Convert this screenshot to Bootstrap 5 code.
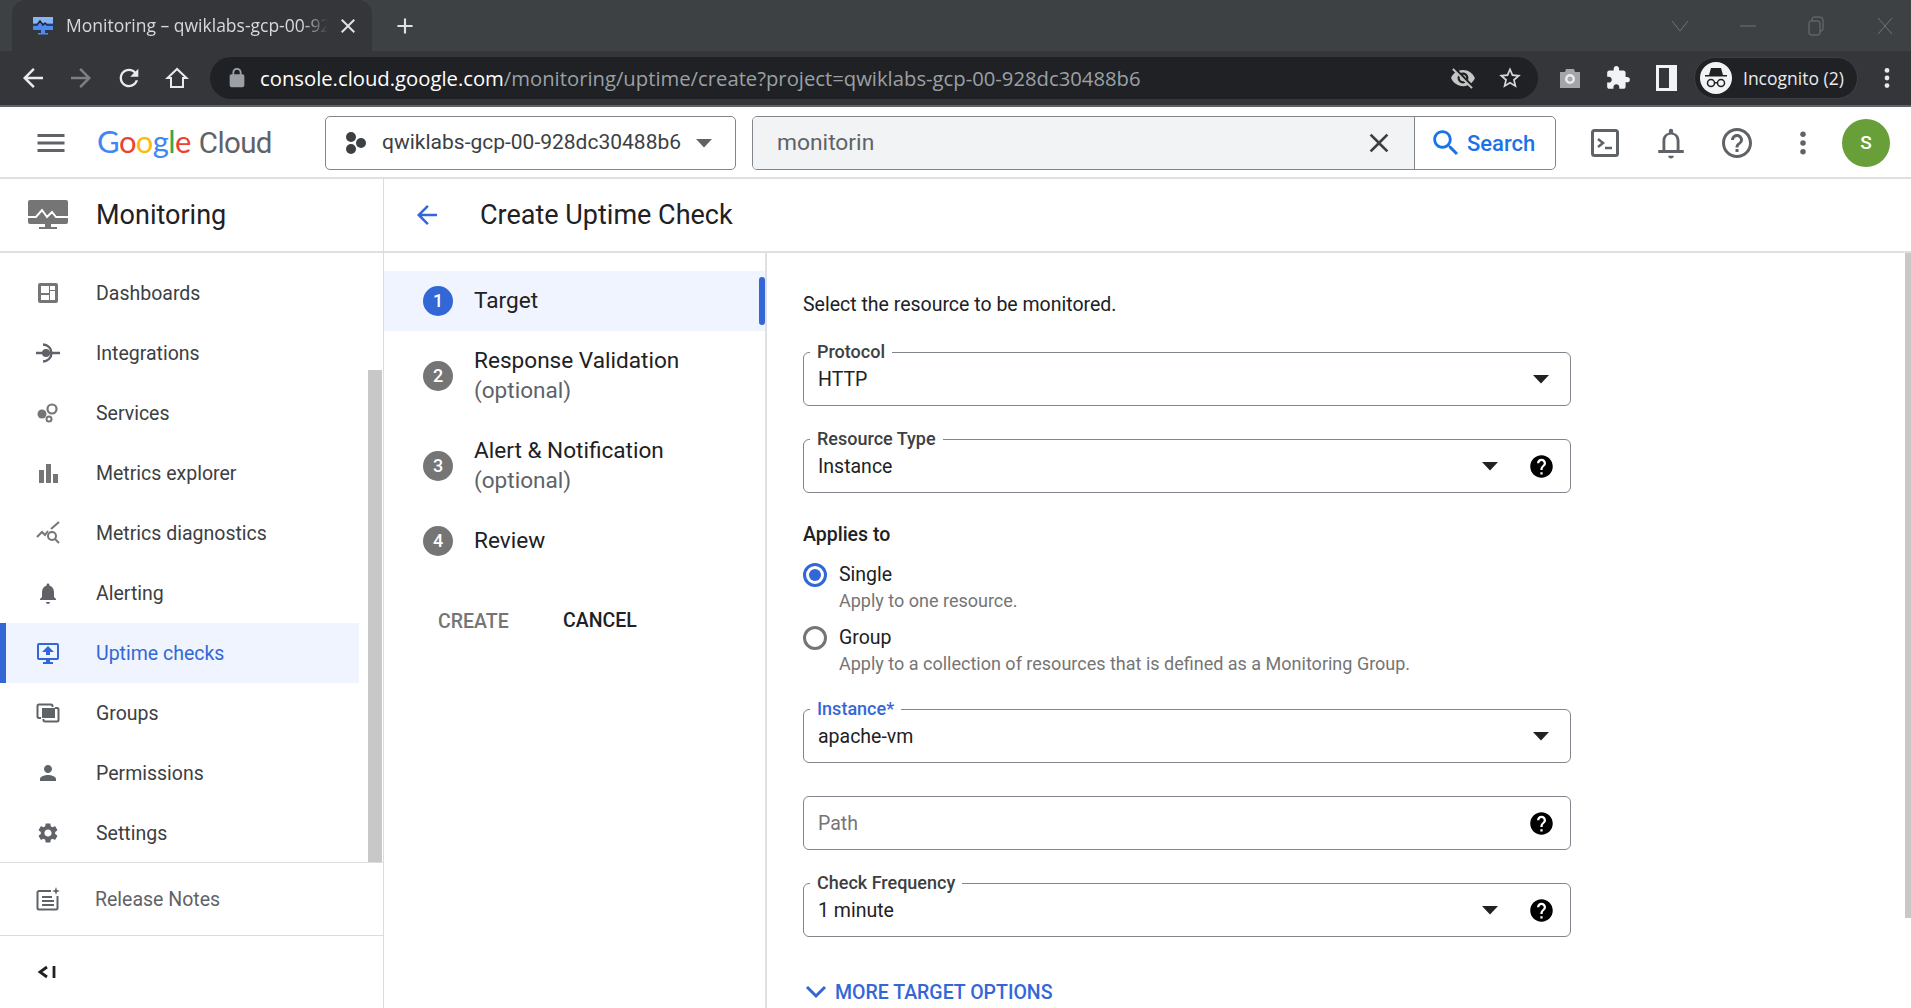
<!DOCTYPE html>
<html lang="en">
<head>
  <meta charset="UTF-8">
  <title>Monitoring – Create Uptime Check</title>
  <meta name="viewport" content="width=device-width, initial-scale=1">
  <link href="https://cdn.jsdelivr.net/npm/bootstrap@5.3.0/dist/css/bootstrap.min.css" rel="stylesheet">
  <style>
    html, body { height: 100%; overflow: hidden; }
    body { font-family: Roboto, "Liberation Sans", sans-serif; font-size: 19.500px; color: #202124; background: #fff; }
    svg { display: block; flex: none; }

    /* browser chrome */
    .tabstrip { height: 51px; background: #3e4144; padding-left: 12px; }
    .tab-active { width: 360px; height: 51px; background: #35363a; border-radius: 14px 14px 0 0; padding-left: 20px; color: #d6d9dc; font-family: "Open Sans", sans-serif; font-size: 17.500px; }
    .tab-title { width: 262px; margin-left: 12px; white-space: nowrap; overflow: hidden; -webkit-mask-image: linear-gradient(90deg, #000 90%, transparent); mask-image: linear-gradient(90deg, #000 90%, transparent); }
    .tab-new { width: 66px; margin-left: 0; }
    .win-btn { width: 68px; }
    .win-btn.last { width: 52px; margin-left: 9px; }
    .toolbar { height: 56px; background: #35363a; border-bottom: 2px solid #5f6368; padding-left: 9px; }
    .tool-slot { width: 48px; height: 42px; }
    .omnibox { width: 1328px; height: 42px; margin-left: 9px; background: #202124; border-radius: 21px; padding-left: 16px; font-family: "Open Sans", sans-serif; font-size: 20.250px; }
    .url-text { padding-top: 1px; }
    .url-host { color: #fff; margin-left: 12px; }
    .url-rest { color: #9aa0a6; }
    .eye-gap { margin-left: 21px; margin-right: 15px; }
    .incog-pill { width: 164px; height: 42px; margin-left: 4px; background: #202124; border: 1px solid #3c4043; border-radius: 21px; padding-left: 5px; color: #e8eaed; font-family: "Open Sans", sans-serif; font-size: 17.500px; }
    .incog-face { width: 32px; height: 32px; border-radius: 50%; background: #f1f3f4; margin-right: 11px; }
    .kebab-slot { width: 48px; margin-left: 5px; }

    /* console top bar */
    .topbar { height: 72px; border-bottom: 2px solid #e0e0e0; padding-top: 2px; }
    .burger-slot { width: 81px; padding-left: 33px; }
    .gc-logo { width: 228px; margin-top: -2px; font-family: Lato, sans-serif; font-size: 31px; letter-spacing: -.6px; line-height: 1; white-space: nowrap; }
    .gc-cloud { color: #5f6368; margin-left: 8px; font-family: Roboto, sans-serif; font-weight: 400; font-size: 29.500px; }
    .project-box { width: 411px; height: 54px; border: 1px solid #80868b; border-radius: 5px; padding-left: 19px; color: #3c4043; font-size: 21px; }
    .project-name { margin-left: 15px; width: 314px; white-space: nowrap; }
    .search-box { width: 804px; height: 54px; margin-left: 16px; border: 1px solid #80868b; border-radius: 5px; overflow: hidden; }
    .search-input { background: #f1f3f4; padding-left: 24px; color: #5f6368; font-size: 22.800px; border-right: 1px solid #80868b; }
    .search-clear { width: 54px; margin-right: 8px; }
    .search-action { width: 140px; padding-left: 14px; color: #1a73e8; font-weight: 500; font-size: 22px; }
    .top-icon { width: 66px; }
    .top-icons { margin-left: 16px; }
    .user-dot { width: 48px; height: 48px; margin-left: 6px; border-radius: 50%; background: #689f38; color: #fff; font-weight: 500; font-size: 19px; }

    /* left nav */
    .app-body { height: 829px; }
    .side-nav { width: 384px; border-right: 1px solid #dadce0; }
    .side-head { height: 74px; border-bottom: 2px solid #e0e0e0; padding-left: 28px; font-size: 27px; color: #202124; }
    .side-head span { margin-left: 28px; }
    .side-scroll { height: 610px; border-bottom: 1px solid #dadce0; }
    .side-list { width: 368px; padding-top: 10px; }
    .side-link { height: 60px; width: 359px; padding-left: 36px; color: #3c4043; flex-shrink: 0; }
    .side-link span { margin-left: 36px; padding-top: 2px; }
    .side-link.on { background: #eff4fe; color: #3367d6; box-shadow: inset 6px 0 0 #3367d6; }
    .side-bar { width: 14px; height: 492px; background: #c8c8c8; align-self: flex-end; }
    .side-notes { height: 73px; padding-left: 36px; border-bottom: 1px solid #dadce0; color: #5f6368; }
    .side-notes span { margin-left: 35px; padding-top: 2px; }
    .side-collapse { padding: 24px 0 0 36px; }

    /* page */
    .page-head { height: 74px; border-bottom: 2px solid #e0e0e0; padding-left: 28px; font-size: 27px; color: #202124; }
    .page-head span { margin-left: 38px; }
    .page-main { height: 755px; }

    .step-col { width: 383px; padding-top: 18px; border-right: 2px solid #e0e0e0; flex: none; }
    .step-row { padding-left: 39px; font-size: 22.600px; line-height: 30px; color: #202124; position: relative; }
    .step-row.one { height: 60px; }
    .step-row.two { height: 90px; }
    .step-row.on { background: #eff4fe; }
    .step-row.on::after { content: ""; position: absolute; right: 0; top: 6px; bottom: 6px; width: 6px; border-radius: 3px; background: #3367d6; }
    .step-num { width: 30px; height: 30px; border-radius: 50%; background: #757575; color: #fff; font-weight: 500; font-size: 18px; margin-right: 21px; flex: none; }
    .step-row.on .step-num { background: #3367d6; }
    .step-opt { color: #5f6368; }
    .step-actions { padding: 35px 0 0 54px; font-weight: 500; }
    .step-actions .off { color: #757575; width: 125px; margin-top: 1px; }

    .form-col { padding: 39px 0 0 36px; position: relative; }
    .form-inner { width: 768px; }
    .line-24 { line-height: 26px; margin-bottom: -2px; }
    .fld { height: 54px; border: 1px solid #80868b; border-radius: 6px; position: relative; padding: 0 15px 0 14px; margin-top: 33px; color: #202124; line-height: 24px; }
    .fld > span { padding-top: 2px; }
    .fld-label { position: absolute; left: 6px; top: -12px; padding: 0 7px; background: #fff; font-size: 18px; font-weight: 500; line-height: 22px; color: #3c4043; }
    .fld-label.hot { color: #3367d6; }
    .fld-ph { color: #757575; }
    .caret-main { margin-right: 6px; }
    .caret-gap { margin-right: 6px; }
    .radio-ring { width: 24px; height: 24px; border-radius: 50%; border: 3px solid #757575; margin-right: 12px; flex: none; }
    .radio-ring.on { border-color: #3367d6; padding: 3px; }
    .radio-ring.on i { display: block; width: 100%; height: 100%; border-radius: 50%; background: #3367d6; }
    .radio-help { padding-left: 36px; color: #757575; font-size: 18px; line-height: 22px; }
    .more-link { margin: 42px 0 0 2px; color: #3367d6; font-weight: 500; line-height: 24px; }
    .more-link span { margin-left: 8px; padding-top: 2px; }
    .page-bar { position: absolute; right: 0; top: 0; width: 6px; height: 665px; background: #c8c8c8; }
  </style>
</head>
<body>

<svg width="0" height="0" class="position-absolute">
  <symbol id="i-help" viewBox="0 0 24 24"><path d="M12 2C6.480 2 2 6.480 2 12s4.480 10 10 10 10-4.480 10-10S17.520 2 12 2zm1 17h-2v-2h2v2zm2.070-7.750l-.9.92C13.450 12.900 13 13.500 13 15h-2v-.5c0-1.100.45-2.100 1.170-2.830l1.240-1.260c.37-.36.59-.86.59-1.410 0-1.100-.9-2-2-2s-2 .9-2 2H8c0-2.210 1.790-4 4-4s4 1.790 4 4c0 .88-.36 1.680-.93 2.250z"/></symbol>
  <symbol id="i-back" viewBox="0 0 24 24"><path d="M20 11H7.830l5.590-5.590L12 4l-8 8 8 8 1.410-1.410L7.830 13H20v-2z"/></symbol>
  <symbol id="i-close" viewBox="0 0 24 24"><path d="M19 6.410L17.590 5 12 10.590 6.410 5 5 6.410 10.590 12 5 17.590 6.410 19 12 13.410 17.590 19 19 17.590 13.410 12z"/></symbol>
  <symbol id="i-caret" viewBox="0 0 16 10"><path d="M0 1h16L8 9.500z"/></symbol>
  <symbol id="i-kebab" viewBox="0 0 24 24"><circle cx="12" cy="5" r="2.200"/><circle cx="12" cy="12" r="2.200"/><circle cx="12" cy="19" r="2.200"/></symbol>
</svg>

<!-- browser window -->
<div class="tabstrip d-flex align-items-center">
  <div class="tab-active d-flex align-items-center">
    <svg width="22" height="20" viewBox="0 0 22 20"><path fill="#4c8bf5" d="M1 1h20v13H1z"/><path fill="#8ab4f8" d="M1 1h20v6H1z"/><path fill="none" stroke="#20262e" stroke-width="1.500" d="M1 9h4l3-4 3 4 2-2 2 2h6"/><path fill="#4c8bf5" d="M9 14h4v3h3v1.500H6V17h3z"/></svg>
    <div class="tab-title">Monitoring – qwiklabs-gcp-00-928dc30488b6</div>
    <svg class="ms-2" width="24" height="24" viewBox="0 0 24 24" fill="#dee1e6"><use href="#i-close"/></svg>
  </div>
  <div class="tab-new d-flex justify-content-center">
    <svg width="26" height="26" viewBox="0 0 24 24" fill="#dee1e6"><path d="M19 13h-6v6h-2v-6H5v-2h6V5h2v6h6v2z"/></svg>
  </div>
  <div class="ms-auto d-flex align-items-center">
    <div class="win-btn d-flex justify-content-center"><svg width="18" height="12" viewBox="0 0 18 12" fill="none" stroke="#6f7376"><path d="M1 1l8 10 8-10"/></svg></div>
    <div class="win-btn d-flex justify-content-center"><svg width="16" height="2" viewBox="0 0 16 2" stroke="#6f7376"><path d="M0 1h16"/></svg></div>
    <div class="win-btn d-flex justify-content-center"><svg width="16" height="20" viewBox="0 0 16 20" fill="none" stroke="#6f7376"><rect x="1" y="5" width="11" height="14" rx="2"/><path d="M4 5V3a2 2 0 0 1 2-2h6a3 3 0 0 1 3 3v9a2 2 0 0 1-2 2h-1"/></svg></div>
    <div class="win-btn last d-flex justify-content-center"><svg width="16" height="20" viewBox="0 0 16 20" fill="none" stroke="#6f7376"><path d="M1 2l14 16M15 2L1 18"/></svg></div>
  </div>
</div>

<div class="toolbar d-flex align-items-center">
  <div class="tool-slot d-flex align-items-center justify-content-center"><svg width="30" height="30" viewBox="0 0 24 24" fill="#e8eaed"><use href="#i-back"/></svg></div>
  <div class="tool-slot d-flex align-items-center justify-content-center"><svg width="30" height="30" viewBox="0 0 24 24" fill="#7d8083" style="transform: scaleX(-1)"><use href="#i-back"/></svg></div>
  <div class="tool-slot d-flex align-items-center justify-content-center"><svg width="28" height="28" viewBox="0 0 24 24" fill="#e8eaed"><path d="M17.650 6.350C16.200 4.900 14.210 4 12 4c-4.420 0-7.990 3.580-7.990 8s3.570 8 7.990 8c3.730 0 6.840-2.550 7.730-6h-2.080c-.82 2.330-3.040 4-5.650 4-3.310 0-6-2.690-6-6s2.690-6 6-6c1.660 0 3.140.69 4.220 1.780L13 11h7V4l-2.350 2.350z"/></svg></div>
  <div class="tool-slot d-flex align-items-center justify-content-center"><svg width="24" height="24" viewBox="0 0 24 24" fill="none" stroke="#e8eaed" stroke-width="2"><path d="M12 3L2.500 12H6v9h12v-9h3.500z"/></svg></div>
  <div class="omnibox d-flex align-items-center">
    <svg width="22" height="22" viewBox="0 0 24 24" fill="#9aa0a6"><path d="M18 8h-1V6c0-2.760-2.240-5-5-5S7 3.240 7 6v2H6c-1.100 0-2 .9-2 2v10c0 1.100.9 2 2 2h12c1.100 0 2-.9 2-2V10c0-1.100-.9-2-2-2zM9 6c0-1.660 1.340-3 3-3s3 1.340 3 3v2H9V6z"/></svg>
    <div class="url-text flex-grow-1 text-nowrap"><span class="url-host">console.cloud.google.com</span><span class="url-rest">/monitoring/uptime/create?project=qwiklabs-gcp-00-928dc30488b6</span></div>
    <svg width="26" height="26" viewBox="0 0 24 24" fill="#c4c7c5"><path d="M12 7c2.760 0 5 2.240 5 5 0 .65-.13 1.260-.36 1.830l2.920 2.920c1.510-1.260 2.700-2.890 3.430-4.750-1.730-4.390-6-7.500-11-7.500-1.400 0-2.740.25-3.980.7l2.160 2.160C10.740 7.130 11.350 7 12 7zM2 4.270l2.280 2.280.46.46C3.080 8.300 1.780 10.020 1 12c1.730 4.390 6 7.500 11 7.500 1.550 0 3.030-.3 4.380-.84l.42.42L19.730 22 21 20.730 3.270 3 2 4.270zM7.530 9.800l1.550 1.550c-.05.21-.08.43-.08.65 0 1.660 1.340 3 3 3 .22 0 .44-.03.65-.08l1.550 1.550c-.67.33-1.410.53-2.200.53-2.760 0-5-2.240-5-5 0-.79.2-1.530.53-2.200zm4.310-.78l3.150 3.150.02-.16c0-1.660-1.340-3-3-3l-.17.01z"/></svg>
    <svg class="eye-gap" width="26" height="26" viewBox="0 0 24 24" fill="#d5d7da"><path d="M22 9.240l-7.190-.62L12 2 9.190 8.630 2 9.240l5.460 4.730L5.820 21 12 17.270 18.180 21l-1.630-7.030L22 9.240zM12 15.400l-3.760 2.270 1-4.280-3.320-2.880 4.380-.38L12 6.100l1.710 4.040 4.380.38-3.320 2.880 1 4.280L12 15.400z"/></svg>
  </div>
  <div class="tool-slot d-flex align-items-center justify-content-center ms-2"><svg width="24" height="24" viewBox="0 0 24 24"><path fill="#a3a5a8" d="M2 6h5l1-3h8l1 3h5v16H2z"/><circle cx="12" cy="13" r="5" fill="#e8eaed"/><circle cx="12" cy="13" r="2.500" fill="#a3a5a8"/></svg></div>
  <div class="tool-slot d-flex align-items-center justify-content-center"><svg width="26" height="26" viewBox="0 0 24 24" fill="#f1f3f4"><path d="M20.500 11H19V7c0-1.100-.9-2-2-2h-4V3.500C13 2.120 11.880 1 10.500 1S8 2.120 8 3.500V5H4c-1.100 0-1.990.9-1.990 2v3.800H3.500c1.490 0 2.700 1.210 2.700 2.700s-1.210 2.700-2.700 2.700H2V20c0 1.100.9 2 2 2h3.800v-1.500c0-1.490 1.210-2.700 2.700-2.700 1.490 0 2.700 1.210 2.700 2.700V22H17c1.100 0 2-.9 2-2v-4h1.500c1.380 0 2.500-1.120 2.500-2.500S21.880 11 20.500 11z"/></svg></div>
  <div class="tool-slot d-flex align-items-center justify-content-center"><svg width="21" height="26" viewBox="0 0 21 26"><path fill="#f1f3f4" d="M0 0h21v26H0z"/><path fill="#35363a" d="M3 3h10v20H3z"/></svg></div>
  <div class="incog-pill d-flex align-items-center">
    <div class="incog-face d-flex align-items-center justify-content-center">
      <svg width="24" height="22" viewBox="0 0 24 22" fill="#202124"><path d="M7 1h10l2 7H5zM1 8h22v1.500H1z"/><circle cx="7" cy="16" r="3.500" fill="none" stroke="#202124" stroke-width="1.500"/><circle cx="17" cy="16" r="3.500" fill="none" stroke="#202124" stroke-width="1.500"/><path d="M10 15h4v1.500h-4z"/></svg>
    </div>
    <span>Incognito (2)</span>
  </div>
  <div class="kebab-slot d-flex justify-content-center"><svg width="26" height="26" viewBox="0 0 24 24" fill="#e8eaed"><use href="#i-kebab"/></svg></div>
</div>

<!-- console header -->
<div class="topbar d-flex align-items-center">
  <div class="burger-slot"><svg width="36" height="36" viewBox="0 0 24 24" fill="#5f6368"><path d="M3 18h18v-2H3v2zm0-5h18v-2H3v2zm0-7v2h18V6H3z"/></svg></div>
  <div class="gc-logo ms-3"><span style="color:#4285f4">G</span><span style="color:#ea4335">o</span><span style="color:#fbbc04">o</span><span style="color:#4285f4">g</span><span style="color:#34a853">l</span><span style="color:#ea4335">e</span><span class="gc-cloud">Cloud</span></div>
  <div class="project-box d-flex align-items-center">
    <svg width="22" height="24" viewBox="0 0 22 24" fill="#3c4043"><circle cx="6" cy="6" r="5"/><circle cx="16" cy="12" r="5"/><circle cx="6" cy="18" r="5"/></svg>
    <span class="project-name">qwiklabs-gcp-00-928dc30488b6</span>
    <svg width="16" height="10" fill="#5f6368"><use href="#i-caret"/></svg>
  </div>
  <div class="search-box d-flex">
    <div class="search-input flex-grow-1 d-flex align-items-center justify-content-between">
      <span>monitorin</span>
      <div class="search-clear d-flex justify-content-center"><svg width="32" height="32" viewBox="0 0 24 24" fill="#3c4043"><use href="#i-close"/></svg></div>
    </div>
    <div class="search-action d-flex align-items-center">
      <svg class="me-1" width="34" height="34" viewBox="0 0 24 24" fill="#1a73e8"><path d="M15.500 14h-.79l-.28-.27C15.410 12.590 16 11.110 16 9.500 16 5.910 13.090 3 9.500 3S3 5.910 3 9.500 5.910 16 9.500 16c1.610 0 3.090-.59 4.230-1.570l.27.28v.79l5 4.990L20.490 19l-4.990-5zm-6 0C7.010 14 5 11.990 5 9.500S7.010 5 9.500 5 14 7.010 14 9.500 11.990 14 9.500 14z"/></svg>
      <span>Search</span>
    </div>
  </div>
  <div class="top-icons d-flex align-items-center">
    <div class="top-icon d-flex justify-content-center"><svg width="28" height="28" viewBox="0 0 28 28" fill="none" stroke="#5f6368" stroke-width="3"><rect x="1.500" y="1.500" width="25" height="25" rx="2"/><path stroke-width="2.500" d="M7 10l5 4-5 4M14 19h7"/></svg></div>
    <div class="top-icon d-flex justify-content-center"><svg width="34" height="34" viewBox="0 0 24 24" fill="#5f6368"><path d="M12 23c1.100 0 2-.9 2-2h-4c0 1.100.9 2 2 2zM18 17v-6.500c0-3.070-1.630-5.140-4.500-5.820V3.500c0-.83-.67-1.500-1.500-1.500s-1.500.67-1.500 1.500v1.180C7.640 5.360 6 7.420 6 10.500V17H3v2h18v-2h-3zm-2 0H8v-6.500c0-2.480 1.510-4.500 4-4.500s4 2.020 4 4.500V17z"/></svg></div>
    <div class="top-icon d-flex justify-content-center"><svg width="36" height="36" viewBox="0 0 24 24" fill="#5f6368"><path d="M11 18h2v-2h-2v2zm1-16C6.480 2 2 6.480 2 12s4.480 10 10 10 10-4.480 10-10S17.520 2 12 2zm0 18c-4.410 0-8-3.590-8-8s3.590-8 8-8 8 3.590 8 8-3.590 8-8 8zm0-14c-2.210 0-4 1.790-4 4h2c0-1.100.9-2 2-2s2 .9 2 2c0 2-3 1.750-3 5h2c0-2.250 3-2.500 3-5 0-2.210-1.790-4-4-4z"/></svg></div>
    <div class="top-icon d-flex justify-content-center"><svg width="30" height="30" viewBox="0 0 24 24" fill="#5f6368"><use href="#i-kebab"/></svg></div>
  </div>
  <div class="user-dot d-flex align-items-center justify-content-center">S</div>
</div>

<div class="app-body d-flex">
  <aside class="side-nav flex-shrink-0">
    <div class="side-head d-flex align-items-center">
      <svg width="40" height="30" viewBox="0 0 40 30"><path fill="#757575" d="M0 2a2 2 0 0 1 2-2h36a2 2 0 0 1 2 2v20a2 2 0 0 1-2 2H2a2 2 0 0 1-2-2z"/><path fill="none" stroke="#fff" stroke-width="2" d="M0 17h8l6-7 5 7 5-5 4 5h12"/><path fill="#757575" d="M17 24h6v3h6v2H11v-2h6z"/></svg>
      <span>Monitoring</span>
    </div>
    <div class="side-scroll d-flex">
      <nav class="side-list nav flex-column flex-nowrap">
        <a class="side-link d-flex align-items-center text-decoration-none" href="#"><svg width="24" height="24" viewBox="0 0 24 24" fill="#757575"><path fill-rule="evenodd" d="M4 2h16a2 2 0 0 1 2 2v16a2 2 0 0 1-2 2H4a2 2 0 0 1-2-2V4a2 2 0 0 1 2-2zm1 3v7h8V5zm9 0v4h5V5zm0 5v9h5v-9zm-9 4v5h8v-5z"/></svg><span>Dashboards</span></a>
        <a class="side-link d-flex align-items-center text-decoration-none" href="#"><svg width="24" height="24" viewBox="0 0 24 24" fill="none" stroke="#5f6368" stroke-width="2.400"><path d="M0 12h24M7 3.500A8.500 8.500 0 0 1 7 20.500"/><circle cx="10" cy="12" r="4" fill="#5f6368" stroke="none"/></svg><span>Integrations</span></a>
        <a class="side-link d-flex align-items-center text-decoration-none" href="#"><svg width="24" height="24" viewBox="0 0 24 24"><circle cx="6" cy="13" r="4.500" fill="#757575"/><circle cx="16" cy="8" r="4.500" fill="none" stroke="#757575" stroke-width="2.200"/><circle cx="13" cy="18" r="2.500" fill="none" stroke="#757575" stroke-width="2"/></svg><span>Services</span></a>
        <a class="side-link d-flex align-items-center text-decoration-none" href="#"><svg width="24" height="24" viewBox="0 0 24 24" fill="#757575"><path d="M3 9h5v13H3zM10 3h5v19h-5zM17 13h5v9h-5z"/></svg><span>Metrics explorer</span></a>
        <a class="side-link d-flex align-items-center text-decoration-none" href="#"><svg width="24" height="24" viewBox="0 0 24 24" fill="none" stroke="#757575" stroke-width="2"><path d="M1 16l5-5 3 3 3-4M15 8l8-7"/><circle cx="16" cy="15" r="4"/><path d="M19 18l4 4"/></svg><span>Metrics diagnostics</span></a>
        <a class="side-link d-flex align-items-center text-decoration-none" href="#"><svg width="24" height="24" viewBox="0 0 24 24" fill="#5f6368"><path d="M12 23c1.100 0 2-.9 2-2h-4c0 1.100.89 2 2 2zm8-5l-2-2v-5c0-3.070-1.640-5.640-4.500-6.320V4c0-.83-.67-1.500-1.500-1.500s-1.500.67-1.500 1.500v.68C7.630 5.360 6 7.920 6 11v5l-2 2v1h16z"/></svg><span>Alerting</span></a>
        <a class="side-link on d-flex align-items-center text-decoration-none" href="#"><svg width="24" height="24" viewBox="0 0 24 24" fill="#3367d6"><path fill-rule="evenodd" d="M3 2h18a2 2 0 0 1 2 2v13a2 2 0 0 1-2 2h-7v2h3v2H7v-2h3v-2H3a2 2 0 0 1-2-2V4a2 2 0 0 1 2-2zm0 2v13h18V4zm9 1l6 6h-4v3h-4v-3H6z"/></svg><span>Uptime checks</span></a>
        <a class="side-link d-flex align-items-center text-decoration-none" href="#"><svg width="24" height="24" viewBox="0 0 24 24" fill="none" stroke="#5f6368" stroke-width="2"><path d="M5 17H3a1.500 1.500 0 0 1-1.500-1.500V5A1.500 1.500 0 0 1 3 3.500h12A1.500 1.500 0 0 1 16.500 5v1M19 7h2a1.500 1.500 0 0 1 1.500 1.500V19a1.500 1.500 0 0 1-1.500 1.500H9A1.500 1.500 0 0 1 7.500 19v-1"/><rect x="7" y="8" width="11" height="8" fill="#5f6368"/></svg><span>Groups</span></a>
        <a class="side-link d-flex align-items-center text-decoration-none" href="#"><svg width="24" height="24" viewBox="0 0 24 24" fill="#5f6368"><path d="M12 12c2.210 0 4-1.790 4-4s-1.790-4-4-4-4 1.790-4 4 1.790 4 4 4zm0 2c-2.670 0-8 1.340-8 4v2h16v-2c0-2.660-5.330-4-8-4z"/></svg><span>Permissions</span></a>
        <a class="side-link d-flex align-items-center text-decoration-none" href="#"><svg width="24" height="24" viewBox="0 0 24 24" fill="#5f6368"><path d="M19.140 12.940c.04-.3.06-.61.06-.94 0-.32-.02-.64-.07-.94l2.030-1.580c.18-.14.23-.41.12-.61l-1.920-3.320c-.12-.22-.37-.29-.59-.22l-2.390.96c-.5-.38-1.030-.7-1.620-.94l-.36-2.540c-.04-.24-.24-.41-.48-.41h-3.840c-.24 0-.43.17-.47.41l-.36 2.540c-.59.24-1.130.57-1.620.94l-2.390-.96c-.22-.08-.47 0-.59.22L2.740 8.870c-.12.21-.08.47.12.61l2.030 1.580c-.05.3-.09.63-.09.94s.02.64.07.94l-2.030 1.580c-.18.14-.23.41-.12.61l1.920 3.320c.12.22.37.29.59.22l2.390-.96c.5.38 1.030.7 1.620.94l.36 2.540c.05.24.24.41.48.41h3.840c.24 0 .44-.17.47-.41l.36-2.540c.59-.24 1.130-.56 1.620-.94l2.390.96c.22.08.47 0 .59-.22l1.920-3.320c.12-.22.07-.47-.12-.61l-2.010-1.580zM12 15.600c-1.980 0-3.600-1.620-3.600-3.600s1.620-3.600 3.600-3.600 3.600 1.620 3.600 3.600-1.620 3.600-3.600 3.600z"/></svg><span>Settings</span></a>
      </nav>
      <div class="side-bar"></div>
    </div>
    <div class="side-notes d-flex align-items-center">
      <svg width="24" height="24" viewBox="0 0 24 24" fill="none" stroke="#5f6368" stroke-width="2"><path d="M15 4H3a1.500 1.500 0 0 0-1.500 1.500V21A1.500 1.500 0 0 0 3 22.500h17a1.500 1.500 0 0 0 1.500-1.500V9"/><path d="M6 10h10M6 14h12M6 18h12"/><path fill="#5f6368" stroke="none" d="M20 0l1 3 3 1-3 1-1 3-1-3-3-1 3-1z"/></svg>
      <span>Release Notes</span>
    </div>
    <div class="side-collapse">
      <svg width="24" height="24" viewBox="0 0 24 24" fill="none" stroke="#202124" stroke-width="2.800"><path d="M11 7l-7 5 7 5M18 6v12"/></svg>
    </div>
  </aside>

  <main class="flex-grow-1 d-flex flex-column">
    <div class="page-head d-flex align-items-center">
      <svg width="30" height="30" viewBox="0 0 24 24" fill="#3367d6"><use href="#i-back"/></svg>
      <span>Create Uptime Check</span>
    </div>
    <div class="page-main d-flex">
      <div class="step-col">
        <div class="step-row one on d-flex align-items-center"><div class="step-num d-flex align-items-center justify-content-center">1</div><div>Target</div></div>
        <div class="step-row two d-flex align-items-center"><div class="step-num d-flex align-items-center justify-content-center">2</div><div>Response Validation<br><span class="step-opt">(optional)</span></div></div>
        <div class="step-row two d-flex align-items-center"><div class="step-num d-flex align-items-center justify-content-center">3</div><div>Alert &amp; Notification<br><span class="step-opt">(optional)</span></div></div>
        <div class="step-row one d-flex align-items-center"><div class="step-num d-flex align-items-center justify-content-center">4</div><div>Review</div></div>
        <div class="step-actions d-flex">
          <div class="off">CREATE</div>
          <div>CANCEL</div>
        </div>
      </div>
      <div class="form-col flex-grow-1">
        <div class="form-inner">
          <div class="line-24">Select the resource to be monitored.</div>
          <div class="fld d-flex align-items-center justify-content-between" style="margin-top:36px">
            <label class="fld-label">Protocol</label><span>HTTP</span>
            <svg class="caret-main" width="16" height="10" fill="#202124"><use href="#i-caret"/></svg>
          </div>
          <div class="fld d-flex align-items-center">
            <label class="fld-label">Resource Type</label><span class="me-auto">Instance</span>
            <svg class="caret-gap" width="16" height="10" fill="#202124"><use href="#i-caret"/></svg>
            <svg class="ms-4" width="27" height="27" viewBox="0 0 24 24" fill="#000"><use href="#i-help"/></svg>
          </div>
          <div class="fw-medium line-24" style="margin-top:29px">Applies to</div>
          <div class="d-flex align-items-center line-24" style="margin-top:16px"><div class="radio-ring on"><i></i></div>Single</div>
          <div class="radio-help" style="margin-top:4px">Apply to one resource.</div>
          <div class="d-flex align-items-center line-24" style="margin-top:13px"><div class="radio-ring"></div>Group</div>
          <div class="radio-help" style="margin-top:4px">Apply to a collection of resources that is defined as a Monitoring Group.</div>
          <div class="fld d-flex align-items-center justify-content-between" style="margin-top:34px">
            <label class="fld-label hot">Instance*</label><span>apache-vm</span>
            <svg class="caret-main" width="16" height="10" fill="#202124"><use href="#i-caret"/></svg>
          </div>
          <div class="fld d-flex align-items-center justify-content-between">
            <span class="fld-ph">Path</span>
            <svg width="27" height="27" viewBox="0 0 24 24" fill="#000"><use href="#i-help"/></svg>
          </div>
          <div class="fld d-flex align-items-center">
            <label class="fld-label">Check Frequency</label><span class="me-auto">1 minute</span>
            <svg class="caret-gap" width="16" height="10" fill="#202124"><use href="#i-caret"/></svg>
            <svg class="ms-4" width="27" height="27" viewBox="0 0 24 24" fill="#000"><use href="#i-help"/></svg>
          </div>
          <div class="more-link d-flex align-items-center">
            <svg width="22" height="14" viewBox="0 0 22 14" fill="none" stroke="#3367d6" stroke-width="3"><path d="M2 2l9 9 9-9"/></svg>
            <span>MORE TARGET OPTIONS</span>
          </div>
        </div>
        <div class="page-bar"></div>
      </div>
    </div>
  </main>
</div>

<script src="https://cdn.jsdelivr.net/npm/bootstrap@5.3.0/dist/js/bootstrap.bundle.min.js"></script>
</body>
</html>
